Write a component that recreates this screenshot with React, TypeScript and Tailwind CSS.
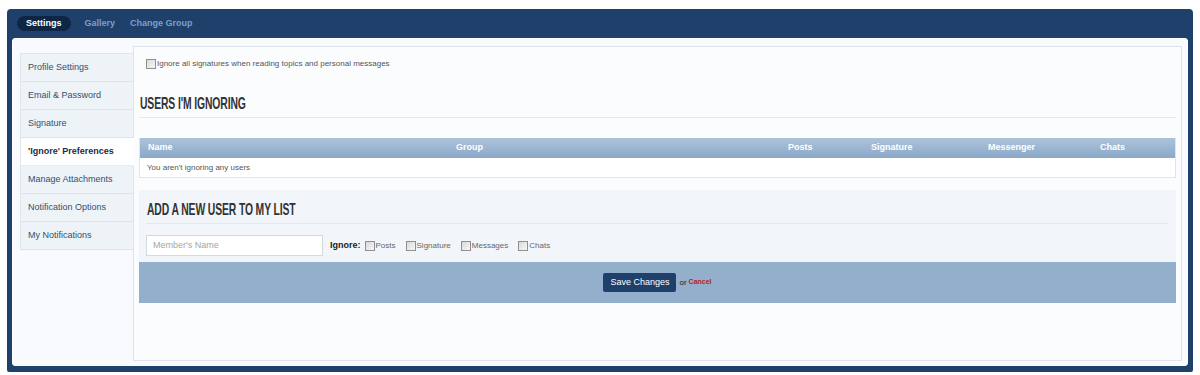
const sideItems = [
  "Profile Settings",
  "Email & Password",
  "Signature",
  "'Ignore' Preferences",
  "Manage Attachments",
  "Notification Options",
  "My Notifications",
];

const columns = ["Name", "Group", "Posts", "Signature", "Messenger", "Chats"];

function Box() {
  return (
    <span className="inline-block w-[10px] h-[10px] border border-[#8f8f8f] bg-gradient-to-br from-[#d9d9d9] to-[#f7f7f7] shrink-0" />
  );
}

function Heading({ text }: { text: string }) {
  return (
    <div className="h-[20px] leading-[20px] whitespace-nowrap">
      <span className="inline-block origin-left scale-x-[0.61] text-[17px] font-bold text-[#333] tracking-[-0.2px]">
        {text}
      </span>
    </div>
  );
}

export default function App() {
  return (
    <div className="w-[1200px] h-[375px] bg-white pt-[9px] px-[7px] font-['Liberation_Sans',Arial,sans-serif]">
      <div className="h-[363px] bg-[#1e406b] rounded-t-[4px] rounded-b-[2px] flex flex-col px-[5px] pb-[6px]">
        {/* tabs */}
        <div className="h-[29px] flex items-center pl-[5px] text-[9px] font-bold">
          <span className="h-[15px] px-[9px] rounded-full bg-[#0e2643] text-white flex items-center">Settings</span>
          <span className="ml-[14px] text-[#7e9fc4]">Gallery</span>
          <span className="ml-[15px] text-[#7e9fc4]">Change Group</span>
        </div>

        <div className="flex-1 bg-[#f8fafd] rounded-[3px] border border-white flex pl-[7px] pr-[5px] pt-[7px] pb-[4px]">
          {/* sidebar */}
          <div className="w-[113px] mt-[7px] self-start border-l border-t border-[#dfe6ee] relative z-10">
            {sideItems.map((s, i) =>
              i === 3 ? (
                <div
                  key={s}
                  className="h-[28px] flex items-center pl-[7px] -mr-px bg-white text-[9px] font-bold text-[#1b2e46] border-b border-[#e6ebf0]"
                >
                  {s}
                </div>
              ) : (
                <div
                  key={s}
                  className="h-[28px] flex items-center pl-[7px] bg-[#eef3f8] text-[9px] text-[#34506f] border-b border-[#dce4ec]"
                >
                  {s}
                </div>
              )
            )}
          </div>

          {/* content */}
          <div className="flex-1 border border-[#dde4eb] bg-[#fbfcfe] px-[5px]">
            <div className="mt-[12px] ml-[7px] flex items-center gap-[1px] h-[10px]">
              <Box />
              <span className="text-[8px] text-[#555]">Ignore all signatures when reading topics and personal messages</span>
            </div>

            <div className="mt-[25px] pb-[3px] border-b border-[#e3e8ee] pl-px">
              <Heading text="USERS I'M IGNORING" />
            </div>

            <div className="mt-[20px] border border-[#dfe5eb] border-t-0">
              <div className="h-[20px] grid grid-cols-[308px_332px_83px_117px_112px_1fr] items-center bg-gradient-to-b from-[#adc3da] to-[#8ba8c9] text-[9px] font-bold text-white">
                {columns.map((c) => (
                  <span key={c} className="pl-[8px]">{c}</span>
                ))}
              </div>
              <div className="h-[19px] flex items-center pl-[7px] bg-white text-[8px] text-[#555]">
                You aren't ignoring any users
              </div>
            </div>

            <div className="mt-[12px] bg-[#f2f6fa] px-[7px] pt-[10px] pb-[6px]">
              <div className="pb-[3px] border-b border-[#e2e8ef] pl-px">
                <Heading text="ADD A NEW USER TO MY LIST" />
              </div>
              <div className="mt-[11px] flex items-center">
                <div className="w-[177px] h-[21px] border border-[#d3d9df] bg-white flex items-center pl-[6px] text-[9px] text-[#a5a5a5]">
                  Member's Name
                </div>
                <span className="ml-[7px] text-[9px] font-bold text-[#222]">Ignore:</span>
                <span className="ml-[4px] flex items-center gap-[1px] text-[8px] text-[#666]">
                  <Box /> Posts
                </span>
                <span className="ml-[10px] flex items-center gap-[1px] text-[8px] text-[#666]">
                  <Box /> Signature
                </span>
                <span className="ml-[10px] flex items-center gap-[1px] text-[8px] text-[#666]">
                  <Box /> Messages
                </span>
                <span className="ml-[10px] flex items-center gap-[1px] text-[8px] text-[#666]">
                  <Box /> Chats
                </span>
              </div>
            </div>

            <div className="h-[41px] bg-[#94afcb] flex items-center justify-center">
              <span className="h-[19px] w-[73px] rounded-[2px] bg-[#1e406b] text-white text-[9px] flex items-center justify-center">
                Save Changes
              </span>
              <span className="ml-[3px] text-[8px] text-[#222]">or</span>
              <span className="ml-[2px] text-[7px] font-bold text-[#b3222c]">Cancel</span>
            </div>
          </div>
        </div>
      </div>
    </div>
  );
}
